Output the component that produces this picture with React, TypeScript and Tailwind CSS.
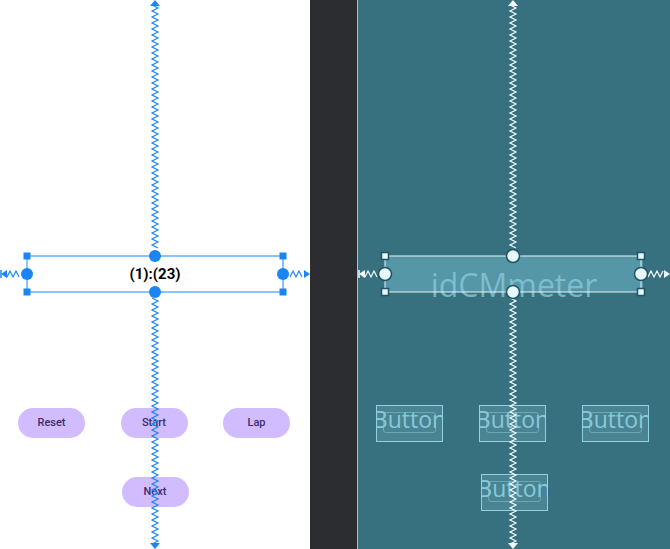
import type { ReactNode } from 'react'

// zigzag polyline points between two positions
function zigV(x: number, y0: number, y1: number, amp = 3, step = 3) {
  const pts: string[] = []
  let i = 0
  for (let y = y0; y <= y1; y += step, i++) {
    pts.push(`${i % 2 === 0 ? x - amp : x + amp},${y}`)
  }
  return pts.join(' ')
}

function zigH(y: number, x0: number, x1: number, amp = 3, step = 3) {
  const pts: string[] = []
  let i = 0
  for (let x = x0; x <= x1; x += step, i++) {
    pts.push(`${x},${i % 2 === 0 ? y + amp : y - amp}`)
  }
  return pts.join(' ')
}

type Look = {
  line: string
  zig: string
  handleFill: string
  handleStroke: string
  handleStrokeWidth: number
}

function Constraints({ look, width }: { look: Look; width: number }) {
  const cx = 155
  const top = 256
  const bottom = 292
  const left = 27
  const right = 283
  const mid = 274
  return (
    <svg
      className="pointer-events-none absolute inset-0"
      width={width}
      height={549}
      viewBox={`0 0 ${width} 549`}
    >
      {/* vertical chains */}
      <polyline points={zigV(cx, 5, 250)} fill="none" stroke={look.zig} strokeWidth={1.2} />
      <polyline points={zigV(cx, 298, 544)} fill="none" stroke={look.zig} strokeWidth={1.2} />
      <polygon points={`${cx - 5},6 ${cx + 5},6 ${cx},0`} fill={look.zig} />
      <polygon points={`${cx - 5},543 ${cx + 5},543 ${cx},549`} fill={look.zig} />

      {/* horizontal chains */}
      <polyline points={zigH(mid, 7, 20)} fill="none" stroke={look.zig} strokeWidth={1.2} />
      <polygon points={`1,${mid} 7,${mid - 4} 7,${mid + 4}`} fill={look.zig} />
      <line x1={1} y1={mid - 4} x2={1} y2={mid + 4} stroke={look.zig} strokeWidth={1.5} />
      <polyline points={zigH(mid, 290, width - 7)} fill="none" stroke={look.zig} strokeWidth={1.2} />
      <polygon points={`${width},${mid} ${width - 6},${mid - 4} ${width - 6},${mid + 4}`} fill={look.zig} />

      {/* selection frame */}
      <line x1={left} y1={top} x2={right} y2={top} stroke={look.line} strokeWidth={1} />
      <line x1={left} y1={bottom} x2={right} y2={bottom} stroke={look.line} strokeWidth={1} />
      <line x1={left} y1={top} x2={left} y2={bottom} stroke={look.line} strokeWidth={1} />
      <line x1={right} y1={top} x2={right} y2={bottom} stroke={look.line} strokeWidth={1} />

      {[
        [left, top],
        [right, top],
        [left, bottom],
        [right, bottom],
      ].map(([x, y]) => (
        <rect
          key={`${x}-${y}`}
          x={x - 3.5}
          y={y - 3.5}
          width={7}
          height={7}
          fill={look.handleFill}
          stroke={look.handleStroke}
          strokeWidth={look.handleStrokeWidth}
        />
      ))}
      {[
        [cx, top],
        [cx, bottom],
        [left, mid],
        [right, mid],
      ].map(([x, y]) => (
        <circle
          key={`c${x}-${y}`}
          cx={x}
          cy={y}
          r={look.handleStrokeWidth ? 6.5 : 6}
          fill={look.handleFill}
          stroke={look.handleStroke}
          strokeWidth={look.handleStrokeWidth}
        />
      ))}
    </svg>
  )
}

const roboto = { fontFamily: 'Roboto, "Liberation Sans", sans-serif' }
const openSans = { fontFamily: '"Open Sans", "Noto Sans", sans-serif' }

function DesignButton({ children }: { children: ReactNode }) {
  return (
    <div
      className="flex h-[30px] w-[67px] items-center justify-center rounded-full bg-[#d0bcff] text-[11px] font-medium text-[#3b2d6b]"
      style={roboto}
    >
      {children}
    </div>
  )
}

function BlueprintButton() {
  return (
    <div className="relative h-[37px] w-[67px] overflow-hidden border border-[#8fd3e3] bg-[#4a8493]">
      <div className="absolute left-[6px] right-[6px] top-[6px] bottom-[8px] rounded-[3px] border border-[#7fbfce]/60" />
      <div
        className="absolute inset-x-[-10px] top-[-5px] text-center text-[23px] leading-[36px] text-[#86c9da]"
        style={openSans}
      >
        Button
      </div>
    </div>
  )
}

export default function App() {
  return (
    <div className="flex h-[549px] w-[670px] overflow-hidden bg-[#2b2d30]">
      {/* Design surface */}
      <div className="relative flex h-full w-[310px] shrink-0 flex-col bg-white">
        <div className="mt-[256px] px-[27px]">
          <div
            className="flex h-[36px] items-center justify-center text-[15px] font-bold text-black"
            style={roboto}
          >
            (1):(23)
          </div>
        </div>
        <div className="mt-[116px] flex justify-between pl-[18px] pr-[20px]">
          <DesignButton>Reset</DesignButton>
          <DesignButton>Start</DesignButton>
          <DesignButton>Lap</DesignButton>
        </div>
        <div className="mt-[39px] flex justify-center">
          <DesignButton>Next</DesignButton>
        </div>
        <Constraints
          width={310}
          look={{
            line: '#1a86f5',
            zig: '#1a86f5',
            handleFill: '#1a86f5',
            handleStroke: '#1a86f5',
            handleStrokeWidth: 0,
          }}
        />
      </div>

      <div className="w-[47px] shrink-0" />

      {/* Blueprint surface */}
      <div className="relative flex h-full flex-1 flex-col border-l border-[#7fd3e8] bg-[#37707f]">
        <div className="mt-[256px] px-[27px]">
          <div className="relative h-[36px] bg-[#5596a7]">
            <div
              className="absolute inset-x-[-20px] top-[9px] text-center text-[32px] leading-[40px] text-[#8ccbdc]/75"
              style={openSans}
            >
              idCMmeter
            </div>
          </div>
        </div>
        <div className="mt-[113px] flex justify-between pl-[18px] pr-[21px]">
          <BlueprintButton />
          <BlueprintButton />
          <BlueprintButton />
        </div>
        <div className="mt-[32px] flex justify-center">
          <BlueprintButton />
        </div>
        <Constraints
          width={312}
          look={{
            line: '#e8f6fa',
            zig: '#f4fbfd',
            handleFill: '#e8f7fb',
            handleStroke: '#1f5563',
            handleStrokeWidth: 1.5,
          }}
        />
      </div>
    </div>
  )
}
